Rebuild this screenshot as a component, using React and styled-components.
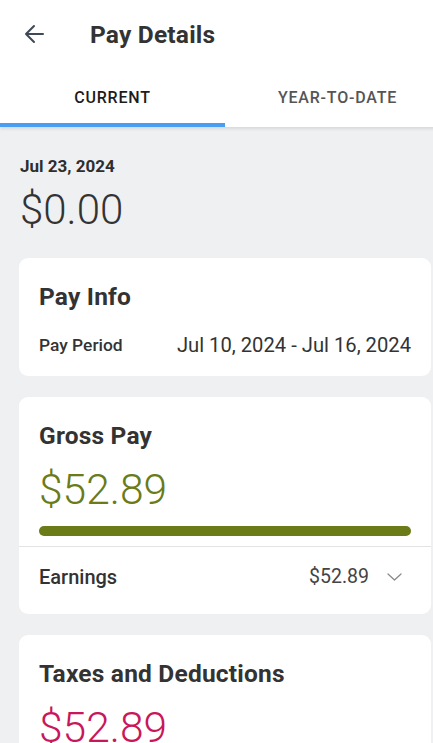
import React from "react";
import styled, { createGlobalStyle } from "styled-components";

const Global = createGlobalStyle`
  html, body { margin: 0; padding: 0; background: #eff0f2; overflow: hidden; }
  body { font-family: Roboto, "Noto Sans", "Liberation Sans", sans-serif; }
  * { box-sizing: border-box; }
`;

const Screen = styled.div`
  width: 450px;
  min-height: 743px;
  background: #eff0f2;
  display: flex;
  flex-direction: column;
`;

const Top = styled.div`
  background: #fff;
  position: relative;
  z-index: 1;
  box-shadow: 0 2px 3px rgba(0, 0, 0, 0.1);
`;

const Header = styled.div`
  height: 68px;
  display: flex;
  align-items: center;
  padding-left: 24px;
  gap: 46px;
`;

const BackButton = styled.button`
  border: 0;
  background: none;
  padding: 0;
  width: 20px;
  height: 20px;
  display: flex;
  color: #3f4856;
`;

const Title = styled.h1`
  margin: 0;
  font-size: 24.5px;
  letter-spacing: 0.2px;
  font-weight: 700;
  color: #333;
`;

const Tabs = styled.div`
  display: flex;
  height: 59px;
`;

const Tab = styled.div`
  flex: 1;
  display: flex;
  align-items: center;
  justify-content: center;
  font-size: 16px;
  letter-spacing: 0.8px;
  font-weight: 500;
  color: ${(p) => (p.$active ? "#1c1c1c" : "#555")};
  border-bottom: 4px solid ${(p) => (p.$active ? "#4a9df0" : "transparent")};
  padding-top: 4px;
`;

const Content = styled.div`
  padding: 29px 19px 0;
  display: flex;
  flex-direction: column;
`;

const Summary = styled.div`
  padding-left: 1px;
  display: flex;
  flex-direction: column;
  gap: 9px;
  margin-bottom: 24px;
`;

const DateText = styled.div`
  font-size: 17px;
  line-height: 20px;
  font-weight: 700;
  color: #2e2e2e;
`;

const Amount = styled.div`
  font-size: ${(p) => p.$size || 42.5}px;
  line-height: ${(p) => (p.$size ? p.$size + 7 : 50)}px;
  font-weight: 300;
  color: ${(p) => p.$color || "#333"};
`;

const Card = styled.section`
  background: #fff;
  border-radius: 9px;
  margin-bottom: 21px;
  padding-top: 25px;
  display: flex;
  flex-direction: column;
`;

const CardBody = styled.div`
  padding: 0 20px ${(p) => p.$bottom || 0}px;
  display: flex;
  flex-direction: column;
`;

const CardTitle = styled.h2`
  margin: 0;
  font-size: 24.5px;
  letter-spacing: 0.2px;
  line-height: 28px;
  font-weight: 700;
  color: #333;
`;

const InfoRow = styled.div`
  display: flex;
  align-items: center;
  justify-content: space-between;
  margin-top: 22px;
`;

const InfoLabel = styled.span`
  font-size: 17.4px;
  font-weight: 500;
  color: #333;
`;

const InfoValue = styled.span`
  font-size: 20.2px;
  line-height: 24px;
  color: #333;
`;

const AmountWrap = styled.div`
  margin-top: 15px;
`;

const Bar = styled.div`
  margin-top: 11px;
  height: 10px;
  border-radius: 5px;
  background: #6a7b17;
`;

const Divider = styled.div`
  margin-top: 10px;
  height: 1px;
  background: #e3e3e3;
`;

const LineRow = styled.div`
  display: flex;
  align-items: center;
  padding: 18px 29px 25px 20px;
`;

const LineLabel = styled.span`
  flex: 1;
  font-size: 20px;
  line-height: 24px;
  font-weight: 500;
  color: #333;
`;

const LineValue = styled.span`
  font-size: 19.5px;
  line-height: 24px;
  color: #444;
  margin-right: 18px;
`;

const Chevron = () => (
  <svg width="15" height="8" viewBox="0 0 15 8" fill="none">
    <path d="M1 1l6.5 6 6.5-6" stroke="#8a8a8a" strokeWidth="1.3" strokeLinecap="round" strokeLinejoin="round" />
  </svg>
);

const BackArrow = () => (
  <svg width="20" height="20" viewBox="0 0 20 20" fill="none">
    <path d="M19 10H2M10 2L2 10l8 8" stroke="currentColor" strokeWidth="2" strokeLinecap="round" strokeLinejoin="round" />
  </svg>
);

export default function App() {
  return (
    <Screen>
      <Global />
      <Top>
        <Header>
          <BackButton aria-label="Back">
            <BackArrow />
          </BackButton>
          <Title>Pay Details</Title>
        </Header>
        <Tabs>
          <Tab $active>CURRENT</Tab>
          <Tab>YEAR-TO-DATE</Tab>
        </Tabs>
      </Top>
      <Content>
        <Summary>
          <DateText>Jul 23, 2024</DateText>
          <Amount $size={42}>$0.00</Amount>
        </Summary>

        <Card>
          <CardBody $bottom={19}>
            <CardTitle>Pay Info</CardTitle>
            <InfoRow>
              <InfoLabel>Pay Period</InfoLabel>
              <InfoValue>Jul 10, 2024 - Jul 16, 2024</InfoValue>
            </InfoRow>
          </CardBody>
        </Card>

        <Card>
          <CardBody>
            <CardTitle>Gross Pay</CardTitle>
            <AmountWrap>
              <Amount $color="#6a7b17">$52.89</Amount>
            </AmountWrap>
            <Bar />
          </CardBody>
          <Divider />
          <LineRow>
            <LineLabel>Earnings</LineLabel>
            <LineValue>$52.89</LineValue>
            <Chevron />
          </LineRow>
        </Card>

        <Card>
          <CardBody $bottom={30}>
            <CardTitle>Taxes and Deductions</CardTitle>
            <AmountWrap>
              <Amount $color="#c8175a">$52.89</Amount>
            </AmountWrap>
          </CardBody>
        </Card>
      </Content>
    </Screen>
  );
}
